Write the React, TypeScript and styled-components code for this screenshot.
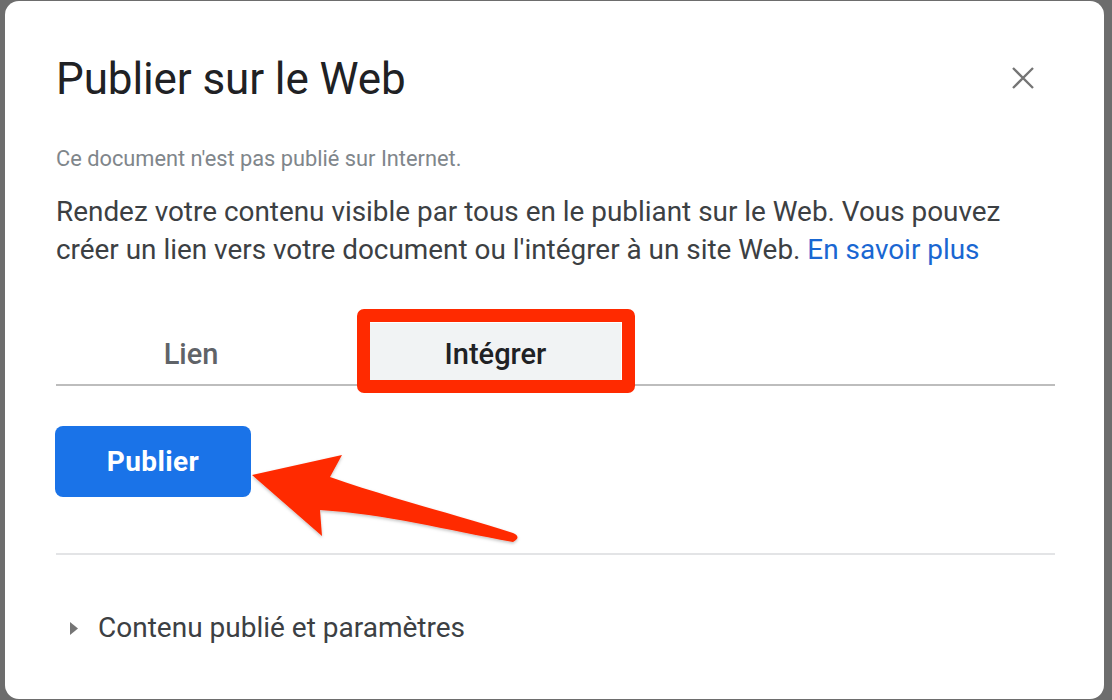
import React from "react";
import styled, { createGlobalStyle } from "styled-components";

const Global = createGlobalStyle`
  html, body { margin: 0; padding: 0; }
  body {
    background: #6d6d6d;
    font-family: Roboto, "Noto Sans", Arial, sans-serif;
    -webkit-font-smoothing: antialiased;
  }
`;

const Page = styled.div`
  width: 1112px;
  height: 700px;
  padding: 1px 8px 0 5px;
  box-sizing: border-box;
  overflow: hidden;
`;

const Dialog = styled.div`
  box-sizing: border-box;
  width: 1099px;
  height: 698px;
  background: #ffffff;
  border-radius: 14px;
  padding: 52px 49px 0 51px;
  display: flex;
  flex-direction: column;
`;

const Header = styled.div`
  display: flex;
  align-items: flex-start;
  justify-content: space-between;
`;

const Title = styled.h1`
  margin: 0;
  font-family: Roboto, sans-serif;
  font-weight: 400;
  font-size: 44px;
  line-height: 52px;
  color: #202124;
  letter-spacing: -0.1px;
`;

const CloseButton = styled.button`
  border: 0;
  background: transparent;
  padding: 0;
  margin: 14px 21px 0 0;
  width: 22px;
  height: 22px;
  display: flex;
  cursor: pointer;
`;

const Subtitle = styled.p`
  margin: 42px 0 0;
  font-size: 21.8px;
  line-height: 24px;
  color: #80868b;
`;

const Body = styled.p`
  margin: 22px 0 0;
  font-size: 27.9px;
  line-height: 38px;
  color: #3c4043;
`;

const Link = styled.a`
  color: #1967d2;
  text-decoration: none;
`;

const Tabs = styled.div`
  margin-top: 54px;
  display: flex;
  align-items: stretch;
  border-bottom: 2px solid #bdbdbd;
  height: 61px;
`;

const Tab = styled.div<{ $active?: boolean; $w: number; $ml?: number }>`
  position: relative;
  width: ${(p) => p.$w}px;
  margin-left: ${(p) => p.$ml ?? 0}px;
  display: flex;
  align-items: center;
  justify-content: center;
  font-size: 29px;
  font-weight: 500;
  padding-top: 1px;
  box-sizing: border-box;
  color: ${(p) => (p.$active ? "#202124" : "#5f6368")};
  background: ${(p) => (p.$active ? "#f1f3f4" : "transparent")};
`;

const Highlight = styled.div`
  position: absolute;
  left: -13px;
  top: -14px;
  right: -14px;
  bottom: -9px;
  border: 13px solid #ff2a00;
  border-radius: 7px;
  pointer-events: none;
`;

const ActionArea = styled.div`
  position: relative;
  padding: 40px 0 56px;
  border-bottom: 2px solid #e3e4e6;
`;

const PublishButton = styled.button`
  width: 196px;
  height: 71px;
  margin-left: -1px;
  border: 0;
  border-radius: 8px;
  background: #1a73e8;
  color: #ffffff;
  font-family: Roboto, sans-serif;
  font-size: 28px;
  font-weight: 700;
  letter-spacing: 0.4px;
  cursor: pointer;
`;

const Arrow = styled.svg`
  position: absolute;
  left: 190px;
  top: 60px;
  overflow: visible;
`;

const Details = styled.div`
  margin-top: 57px;
  display: flex;
  align-items: center;
  gap: 20px;
  padding-left: 14px;
  font-size: 28px;
  line-height: 32px;
  color: #3c4043;
`;

export default function App() {
  return (
    <>
      <Global />
      <Page>
        <Dialog>
          <Header>
            <Title>Publier sur le Web</Title>
            <CloseButton aria-label="Fermer">
              <svg width="22" height="22" viewBox="0 0 22 22">
                <path d="M1 1 L21 21 M21 1 L1 21" stroke="#757575" strokeWidth="2.3" strokeLinecap="butt" />
              </svg>
            </CloseButton>
          </Header>
          <Subtitle>Ce document n'est pas publié sur Internet.</Subtitle>
          <Body>
            Rendez votre contenu visible par tous en le publiant sur le Web. Vous pouvez créer un lien vers
            votre document ou l'intégrer à un site Web. <Link href="#">En savoir plus</Link>
          </Body>
          <Tabs>
            <Tab $w={270}>Lien</Tab>
            <Tab $w={251} $ml={44} $active>
              Intégrer
              <Highlight />
            </Tab>
          </Tabs>
          <ActionArea>
            <PublishButton>Publier</PublishButton>
            <Arrow width="280" height="100" viewBox="0 0 280 100">
              <defs>
                <filter id="sh" x="-10%" y="-10%" width="120%" height="130%">
                  <feDropShadow dx="0" dy="1.5" stdDeviation="1.5" floodColor="#000" floodOpacity="0.25" />
                </filter>
              </defs>
              <path
                d="M6 29 L96 9 L84 31 C150 54 215 70 267 87 Q276 91 267 96 C200 84 140 68 74 64 L76 90 Z"
                fill="#ff2a00"
                filter="url(#sh)"
              />
            </Arrow>
          </ActionArea>
          <Details>
            <svg width="8" height="13" viewBox="0 0 8 13">
              <path d="M0 0 L8 6.5 L0 13 Z" fill="#757575" />
            </svg>
            <span>Contenu publié et paramètres</span>
          </Details>
        </Dialog>
      </Page>
    </>
  );
}
